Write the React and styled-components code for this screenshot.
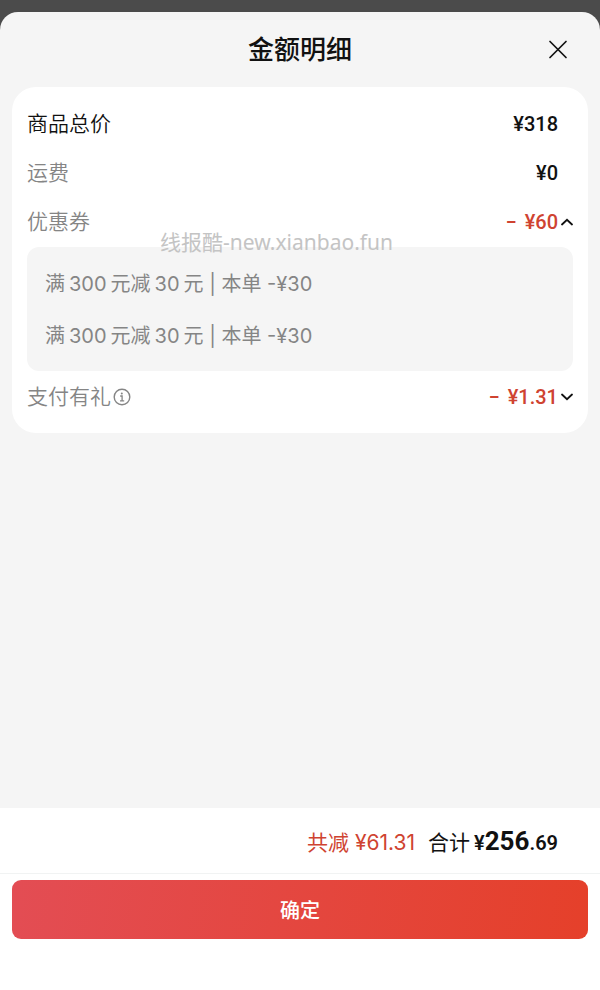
import { useState } from "react";
import styled, { createGlobalStyle } from "styled-components";

const GlobalStyle = createGlobalStyle`
  * {
    box-sizing: border-box;
  }

  body {
    margin: 0;
    background: #4b4b4b;
    font-family: Inter, "Noto Sans CJK SC", sans-serif;
    font-size: 20px;
    color: #111;
  }

  button {
    padding: 0;
    border: none;
    background: none;
    font: inherit;
    color: inherit;
    cursor: pointer;
  }
`;

const Overlay = styled.div`
  display: flex;
  flex-direction: column;
  min-height: 100vh;
  padding-top: 12px;
`;

const Sheet = styled.section`
  display: flex;
  flex: 1;
  flex-direction: column;
  overflow: hidden;
  border-radius: 18px 18px 0 0;
  background: #f5f5f5;
`;

const Header = styled.header`
  display: grid;
  grid-template-columns: 1fr auto 1fr;
  align-items: center;
  height: 75px;
  padding: 0 30px;
`;

const Title = styled.h1`
  grid-column: 2;
  margin: 0;
  font-size: 26px;
  font-weight: 500;
  line-height: 38px;
`;

const CloseButton = styled.button`
  display: flex;
  justify-self: end;
`;

const Card = styled.div`
  position: relative;
  margin: 0 12px;
  padding: 12px 15px 10px;
  border-radius: 24px;
  background: #fff;
`;

const Row = styled.div`
  display: flex;
  align-items: center;
  justify-content: space-between;
  height: ${(props) => (props.$tall ? "52px" : "49px")};
  line-height: 28px;
`;

const Label = styled.span`
  display: flex;
  align-items: center;
  gap: 2px;
  font-size: 21px;
  font-weight: 350;
  color: ${(props) => (props.$dark ? "#111" : "#858585")};
`;

const InfoButton = styled.button`
  display: flex;
`;

const Price = styled.span`
  padding-right: 15px;
  font-family: Roboto, "Noto Sans CJK SC", sans-serif;
  font-size: 20px;
  font-weight: 500;
`;

const Toggle = styled.button`
  display: flex;
  align-items: center;
  gap: 3px;
`;

const Discount = styled.span`
  display: flex;
  gap: 8px;
  font-family: Roboto, "Noto Sans CJK SC", sans-serif;
  font-weight: 500;
  color: #cf4331;
`;

const CouponList = styled.ul`
  margin: 1px 0 0;
  padding: 10px 18px;
  border-radius: 12px;
  background: #f5f5f5;
  list-style: none;
`;

const Coupon = styled.li`
  height: 52px;
  line-height: 54px;
  color: #858585;
`;

const Amount = styled.span`
  margin: 0 4px;
`;

const Watermark = styled.span`
  position: absolute;
  top: 141px;
  left: 148px;
  font-family: "Noto Sans", "Noto Sans CJK SC", sans-serif;
  font-size: 21px;
  line-height: 28px;
  color: #c4c4c4;
  pointer-events: none;
`;

const Footer = styled.footer`
  margin-top: auto;
  padding-bottom: 51px;
  background: #fff;
`;

const Summary = styled.div`
  display: flex;
  align-items: baseline;
  justify-content: flex-end;
  gap: 13px;
  height: 66px;
  padding: 0 42px 0 12px;
  border-bottom: 1px solid #f1f3f3;
  font-size: 21px;
  line-height: 66px;
`;

const Saved = styled.span`
  color: #cf4331;
`;

const Total = styled.span`
  display: flex;
  align-items: baseline;
  gap: 4px;
`;

const TotalPrice = styled.strong`
  font-family: Roboto, "Noto Sans CJK SC", sans-serif;
  font-size: 20px;
  font-weight: 600;
`;

const Yuan = styled.span`
  font-size: 26px;
  font-weight: 700;
`;

const Actions = styled.div`
  padding: 6px 12px 0;
`;

const ConfirmButton = styled.button`
  && {
    display: block;
    width: 100%;
    height: 59px;
    border-radius: 9px;
    background: linear-gradient(100deg, #e34d54, #e5402a);
    font-weight: 500;
    color: #fff;
  }
`;

const coupons = [
  { id: 1, full: 300, minus: 30 },
  { id: 2, full: 300, minus: 30 },
];

const Chevron = ({ up }) => (
  <svg width="12" height="8" viewBox="0 0 12 8" fill="none" aria-hidden="true">
    <path
      d={up ? "M1 6.5 6 1.8l5 4.7" : "M1 1.5 6 6.2l5-4.7"}
      stroke="#111"
      strokeWidth="1.8"
      strokeLinecap="round"
    />
  </svg>
);

const App = () => {
  const [couponOpen, setCouponOpen] = useState(true);
  const [giftOpen, setGiftOpen] = useState(false);

  return (
    <>
      <GlobalStyle />
      <Overlay>
        <Sheet>
          <Header>
            <Title>金额明细</Title>
            <CloseButton type="button" aria-label="关闭">
              <svg width="24" height="24" viewBox="0 0 24 24" fill="none">
                <path
                  d="m4 3.5 16 16M20 3.5l-16 16"
                  stroke="#111"
                  strokeWidth="1.7"
                  strokeLinecap="round"
                />
              </svg>
            </CloseButton>
          </Header>

          <Card>
            <Row>
              <Label $dark>商品总价</Label>
              <Price>¥318</Price>
            </Row>
            <Row>
              <Label>运费</Label>
              <Price>¥0</Price>
            </Row>
            <Row>
              <Label>优惠券</Label>
              <Toggle
                type="button"
                aria-expanded={couponOpen}
                onClick={() => setCouponOpen(!couponOpen)}
              >
                <Discount>
                  <span>−</span>
                  <span>¥60</span>
                </Discount>
                <Chevron up={couponOpen} />
              </Toggle>
            </Row>
            {couponOpen && (
              <CouponList>
                {coupons.map((coupon) => (
                  <Coupon key={coupon.id}>
                    满<Amount>{coupon.full}</Amount>元减
                    <Amount>{coupon.minus}</Amount>元 | 本单 -¥{coupon.minus}
                  </Coupon>
                ))}
              </CouponList>
            )}
            <Row $tall>
              <Label>
                支付有礼
                <InfoButton type="button" aria-label="支付有礼说明">
                  <svg width="18" height="18" viewBox="0 0 18 18" fill="none">
                    <circle cx="9" cy="9" r="7.8" stroke="#858585" strokeWidth="1.4" />
                    <circle cx="8.8" cy="5.4" r="1" fill="#858585" />
                    <path d="M7.2 8h1.9v4.8M7 12.8h4.2" stroke="#858585" strokeWidth="1.3" />
                  </svg>
                </InfoButton>
              </Label>
              <Toggle
                type="button"
                aria-expanded={giftOpen}
                onClick={() => setGiftOpen(!giftOpen)}
              >
                <Discount>
                  <span>−</span>
                  <span>¥1.31</span>
                </Discount>
                <Chevron up={giftOpen} />
              </Toggle>
            </Row>
            <Watermark>线报酷-new.xianbao.fun</Watermark>
          </Card>

          <Footer>
            <Summary>
              <Saved>共减 ¥61.31</Saved>
              <Total>
                <span>合计</span>
                <TotalPrice>
                  ¥<Yuan>256</Yuan>.69
                </TotalPrice>
              </Total>
            </Summary>
            <Actions>
              <ConfirmButton type="button">确定</ConfirmButton>
            </Actions>
          </Footer>
        </Sheet>
      </Overlay>
    </>
  );
};

export default App;
